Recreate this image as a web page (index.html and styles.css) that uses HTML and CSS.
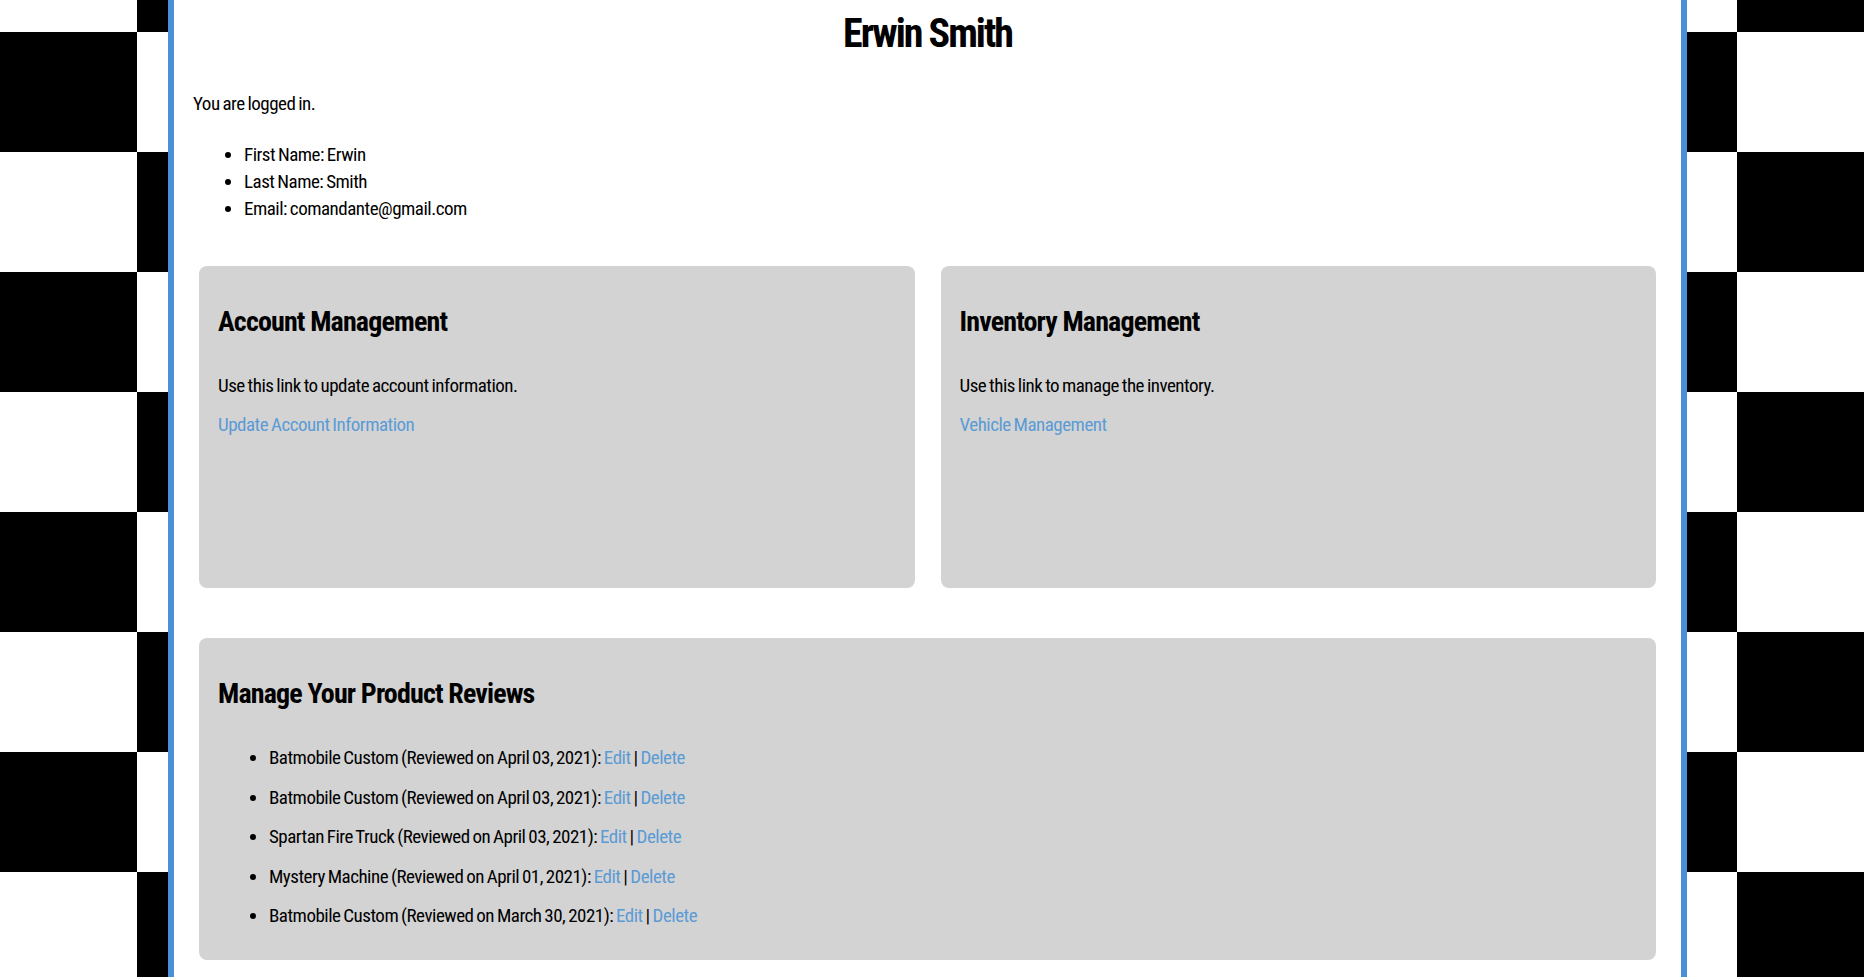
FILE: index.html
```html
<!DOCTYPE html>
<html lang="en">
<head>
    <meta charset="UTF-8">
    <meta name="viewport" content="width=device-width, initial-scale=1.0">
    <title>Erwin Smith | Account</title>
    <link rel="stylesheet" href="styles.css">
</head>
<body>
    <main class="account-page">
        <h1 class="page-title">Erwin Smith</h1>
        <p class="status">You are logged in.</p>
        <ul class="details">
            <li>First Name: Erwin</li>
            <li>Last Name: Smith</li>
            <li>Email: comandante@gmail.com</li>
        </ul>

        <div class="panels">
            <section class="panel">
                <h2>Account Management</h2>
                <p>Use this link to update account information.</p>
                <p class="panel-link"><a href="#">Update Account Information</a></p>
            </section>
            <section class="panel">
                <h2>Inventory Management</h2>
                <p>Use this link to manage the inventory.</p>
                <p class="panel-link"><a href="#">Vehicle Management</a></p>
            </section>
            <section class="panel panel-wide">
                <h2>Manage Your Product Reviews</h2>
                <ul class="reviews">
                    <li>Batmobile Custom (Reviewed on April 03, 2021): <a href="#">Edit</a> | <a href="#">Delete</a></li>
                    <li>Batmobile Custom (Reviewed on April 03, 2021): <a href="#">Edit</a> | <a href="#">Delete</a></li>
                    <li>Spartan Fire Truck (Reviewed on April 03, 2021): <a href="#">Edit</a> | <a href="#">Delete</a></li>
                    <li>Mystery Machine (Reviewed on April 01, 2021): <a href="#">Edit</a> | <a href="#">Delete</a></li>
                    <li>Batmobile Custom (Reviewed on March 30, 2021): <a href="#">Edit</a> | <a href="#">Delete</a></li>
                </ul>
            </section>
        </div>
    </main>
</body>
</html>
```

FILE: styles.css
```css
/* checkered flag background */
body {
    margin: 0;
    font-family: "Liberation Sans Narrow", "Roboto Condensed", "DejaVu Sans Condensed", sans-serif;
    font-size: 19px;
    line-height: 27px;
    letter-spacing: -0.5px;
    word-spacing: -1px;
    color: #000;
    background-color: #fff;
    background-image: conic-gradient(#000 0 25%, #fff 0 50%, #000 0 75%, #fff 0);
    background-size: 320px 240px;
    background-position: 137px 32px;
}

.account-page {
    box-sizing: border-box;
    width: 1519px;
    min-height: 100vh;
    margin-left: 168px;
    padding: 10px 19px 1px;
    background-color: #fff;
    border-left: 6px solid #4a90d9;
    border-right: 6px solid #4a90d9;
}

.page-title {
    margin: 0;
    font-size: 40px;
    line-height: 48px;
    letter-spacing: -2px;
    word-spacing: 0;
    text-align: center;
}

.status {
    margin: 32px 0 0;
}

.details {
    margin: 24px 0 0;
    padding-left: 51px;
}

a {
    color: #5b9bd5;
    text-decoration: none;
}

/* cards */
.panels {
    display: grid;
    grid-template-columns: 1fr 1fr;
    column-gap: 26px;
    row-gap: 50px;
    margin-top: 44px;
    padding: 0 6px;
}

.panel {
    box-sizing: border-box;
    min-height: 322px;
    padding: 39px 19px 31px;
    background-color: #d3d3d3;
    border-radius: 8px;
}

.panel-wide {
    grid-column: 1 / -1;
    min-height: 0;
}

.panel h2 {
    margin: 0;
    font-size: 28px;
    line-height: 34px;
    letter-spacing: -0.85px;
    word-spacing: 0;
}

.panel p {
    margin: 33px 0 0;
}

.panel .panel-link {
    margin-top: 12px;
}

.reviews {
    margin: 33px 0 0;
    padding-left: 51px;
}

.reviews li + li {
    margin-top: 12.5px;
}
```
